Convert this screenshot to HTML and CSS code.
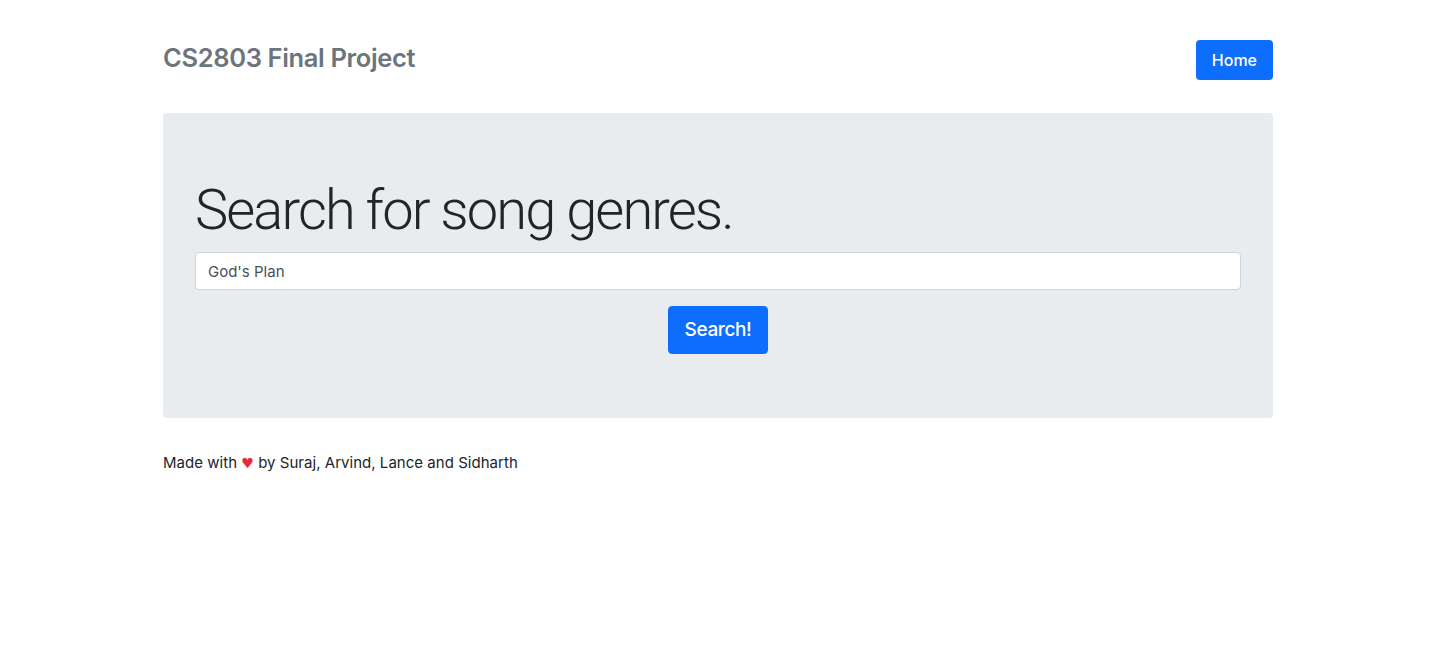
FILE: index.html
```html
<!DOCTYPE html>
<html lang="en">
<head>
<meta charset="utf-8">
<title>CS2803 Final Project</title>
<link rel="stylesheet" href="styles.css">
</head>
<body>
<div class="container">
  <header class="masthead">
    <h3 class="brand">CS2803 Final Project</h3>
    <nav class="nav">
      <a class="nav-link active" href="#">Home</a>
    </nav>
  </header>
  <main class="jumbotron">
    <h1 class="display">Search for song genres.</h1>
    <form class="search-form">
      <input class="form-control" type="text" value="God's Plan">
      <button class="btn-lg" type="button">Search!</button>
    </form>
  </main>
  <footer class="footer">
    <p>Made with <span class="heart">&#9829;</span> by Suraj, Arvind, Lance and Sidharth</p>
  </footer>
</div>
</body>
</html>
```
FILE: styles.css
```css
* { box-sizing: border-box; }
body {
  margin: 0;
  padding-left: 2px;
  font-family: Inter, "Liberation Sans", sans-serif;
  font-size: 16px;
  line-height: 1.5;
  color: #212529;
  background: #fff;
}
.container {
  width: 1110px;
  margin: 0 auto;
}
.masthead {
  display: flex;
  justify-content: space-between;
  align-items: center;
  padding-top: 40px;
  height: 80px;
}
.brand {
  margin: -4px 0 0;
  font-size: 25.5px;
  font-weight: 600;
  color: #6c757d;
  letter-spacing: -0.35px;
  line-height: 1.2;
}
.nav { display: flex; }
.nav-link {
  display: block;
  padding: 8px 16px;
  background: #0d6efd;
  color: #fff;
  text-decoration: none;
  border-radius: 4px;
  font-weight: 500;
  line-height: 24px;
}
.jumbotron {
  margin-top: 33px;
  background: #e9ecef;
  border-radius: 4px;
  padding: 64px 32px;
}
.display {
  margin: 0 0 8px;
  font-family: Roboto, Inter, sans-serif;
  font-size: 56px;
  font-weight: 300;
  line-height: 1.2;
  letter-spacing: -1.9px;
}
.search-form {
  display: flex;
  flex-direction: column;
  align-items: center;
  gap: 16px;
}
.form-control {
  display: block;
  width: 100%;
  height: 38px;
  padding: 6px 12px;
  font-family: inherit;
  font-size: 15px;
  color: #495057;
  background: #fff;
  border: 1px solid #ced4da;
  border-radius: 4px;
}
.btn-lg {
  padding: 8px 16px;
  font-family: inherit;
  font-size: 19px;
  font-weight: 500;
  line-height: 30px;
  color: #fff;
  background: #0d6efd;
  border: 1px solid #0d6efd;
  border-radius: 4px;
  letter-spacing: -0.4px;
}
.footer {
  padding-top: 34px;
}
.footer p {
  margin: 0;
  font-size: 15px;
  letter-spacing: 0.03px;
}
.heart {
  font-family: "DejaVu Sans", sans-serif;
  font-size: 14px;
  color: #e8283c;
}
```
